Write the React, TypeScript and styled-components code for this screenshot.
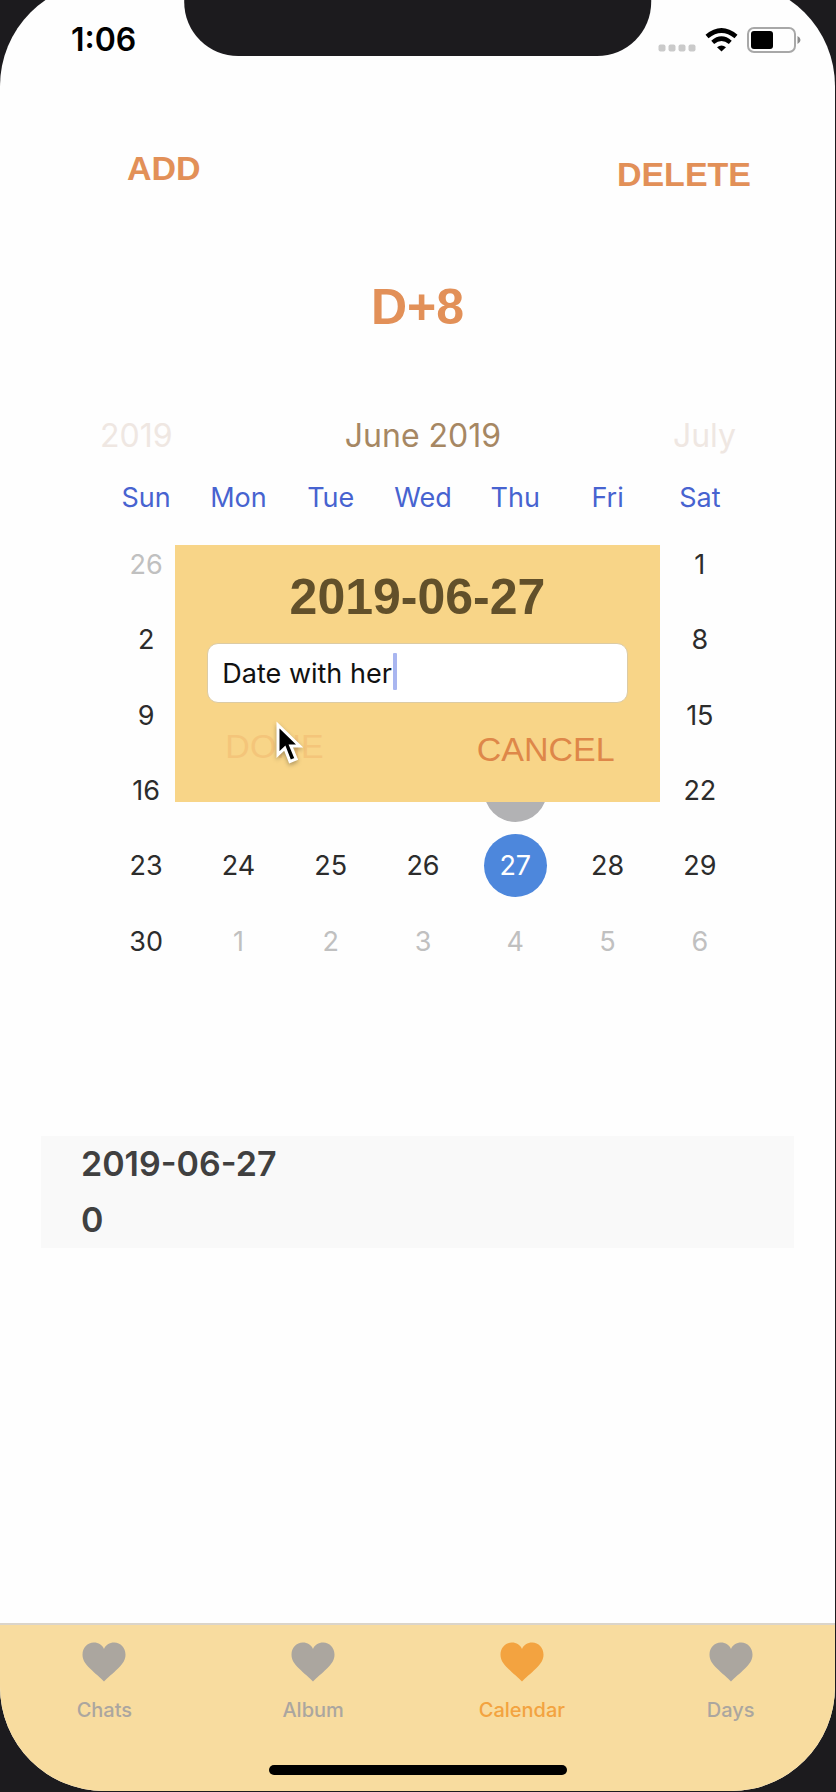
import React, { useState } from "react";
import styled, { createGlobalStyle } from "styled-components";

const ui = `Inter, "Liberation Sans", sans-serif`;
const helvetica = `"Liberation Sans", Arial, sans-serif`;

const GlobalStyle = createGlobalStyle`
  *, *::before, *::after { box-sizing: border-box; }
  body { margin: 0; background: #1c1b1e; font-family: ${ui}; }
  button, input { font: inherit; color: inherit; }
`;

const Bezel = styled.div`
  display: flex;
  min-height: 100vh;
  padding: 0 1px 1px 0;
  overflow: hidden;
  background: #1c1b1e;
`;

const Screen = styled.div`
  flex: 1;
  min-width: 0;
  display: flex;
  flex-direction: column;
  margin-top: -18px;
  padding-top: 18px;
  border-radius: 104px;
  overflow: hidden;
  background: #fefefe;
`;

const StatusBar = styled.div`
  position: relative;
  display: flex;
  align-items: center;
  justify-content: space-between;
  height: 80px;
  padding: 0 34px 0 71px;
`;

const Notch = styled.div`
  position: absolute;
  top: 0;
  left: 50%;
  width: 56%;
  height: 56px;
  transform: translateX(-50%);
  border-radius: 0 0 54px 54px;
  background: #1c1b1e;
`;

const Clock = styled.time`
  font-size: 32px;
  line-height: 40px;
  font-weight: 600;
  color: #000;
`;

const StatusIcons = styled.div`
  display: flex;
  align-items: center;
  gap: 9px;

  svg { display: block; }
`;

const Header = styled.header`
  display: flex;
  justify-content: space-between;
  align-items: flex-start;
  padding: 68px 84px 0 127px;
`;

const TextButton = styled.button<{ $tone?: string; $bold?: boolean; $drop?: number }>`
  border: 0;
  padding: 0;
  background: none;
  margin-top: ${(p) => p.$drop ?? 0}px;
  font-family: ${helvetica};
  font-size: 34px;
  line-height: 40px;
  font-weight: ${(p) => (p.$bold ? 700 : 400)};
  color: ${(p) => p.$tone ?? "#e29058"};
`;

const Counter = styled.h1`
  margin: 83px 0 0;
  font-family: ${helvetica};
  font-size: 50px;
  line-height: 60px;
  font-weight: 700;
  text-align: center;
  color: #e29058;
`;

const CalendarArea = styled.section`
  position: relative;
  margin-top: 79px;
  padding: 0 89px 0 100px;
`;

const Months = styled.div`
  display: grid;
  grid-template-columns: 1fr auto 1fr;
  font-size: 32px;
  line-height: 40px;
  margin-bottom: 22px;
`;

const Month = styled.span<{ $faded?: boolean; $end?: boolean }>`
  color: ${(p) => (p.$faded ? "#efe7e2" : "#a68763")};
  text-align: ${(p) => (p.$end ? "right" : "left")};
  padding-right: ${(p) => (p.$end ? 10 : 0)}px;
`;

const Grid = styled.table`
  width: 100%;
  height: 501px;
  table-layout: fixed;
  border-collapse: collapse;
  font-size: 27px;
`;

const Weekday = styled.th`
  height: 49px;
  padding: 0 0 9px;
  font-weight: 400;
  line-height: 40px;
  color: #4763d0;
`;

const DayCell = styled.td`
  padding: 0;
  text-align: center;
  vertical-align: middle;
`;

type DayKind = "normal" | "muted" | "today" | "selected";
const dayInk: Record<DayKind, string> = {
  normal: "#2c2c2c",
  muted: "#c0c0c0",
  today: "#ffffff",
  selected: "#ffffff",
};
const dayFill: Record<DayKind, string> = {
  normal: "transparent",
  muted: "transparent",
  today: "#b2b2b4",
  selected: "#4d87dc",
};

const Day = styled.button<{ $kind: DayKind }>`
  display: block;
  width: 63px;
  height: 63px;
  margin: 0 auto;
  padding: 0;
  border: 0;
  border-radius: 50%;
  background: ${(p) => dayFill[p.$kind]};
  color: ${(p) => dayInk[p.$kind]};
`;

const Dialog = styled.div`
  position: absolute;
  top: 129px;
  left: 21%;
  right: 21%;
  padding: 22px 32px 0;
  height: 257px;
  background: #f8d588;
`;

const DialogTitle = styled.h2`
  margin: 0 0 16px;
  font-family: ${helvetica};
  font-size: 50px;
  line-height: 60px;
  font-weight: 700;
  text-align: center;
  color: #62502a;
`;

const Field = styled.div`
  position: relative;
`;

const TextInput = styled.input`
  display: block;
  width: 100%;
  height: 60px;
  padding: 0 14px;
  border: 1px solid #dccba4;
  border-radius: 11px;
  background: #fff;
  font-size: 27px;
  line-height: 40px;
  color: #111;
  outline: none;
`;

const Caret = styled.span`
  position: absolute;
  top: 10px;
  left: 186px;
  width: 4px;
  height: 37px;
  border-radius: 1px;
  background: #a9b6f0;
`;

const DialogActions = styled.div`
  position: relative;
  display: flex;
  justify-content: space-between;
  align-items: flex-start;
  padding: 23px 13px 0 18px;
`;

const Pointer = styled.svg`
  position: absolute;
  top: 17px;
  left: 68px;
  overflow: visible;
  filter: drop-shadow(0 2px 2px rgba(0, 0, 0, 0.3));
`;

const Events = styled.dl`
  margin: 157px 41px 40px;
  padding: 0 41px 0 40px;
  background: #f9f9f9;
  font-size: 34px;
  line-height: 56px;
  font-weight: 600;
  color: #404040;

  dt, dd { margin: 0; }
`;

const TabBar = styled.nav`
  position: relative;
  display: grid;
  grid-template-columns: repeat(4, 1fr);
  margin-top: auto;
  height: 168px;
  padding-top: 17px;
  border-top: 2px solid #dbd5ca;
  background: #f8dc9f;
`;

const Tab = styled.a<{ $active?: boolean }>`
  display: flex;
  flex-direction: column;
  align-items: center;
  gap: 16px;
  text-decoration: none;
  font-size: 20px;
  line-height: 24px;
  font-weight: 500;
  color: ${(p) => (p.$active ? "#f3a340" : "#aba69f")};
`;

const HomeIndicator = styled.div`
  position: absolute;
  left: 50%;
  bottom: 16px;
  width: 298px;
  height: 10px;
  transform: translateX(-50%);
  border-radius: 5px;
  background: #000;
`;

const SignalDots = () => (
  <svg width="38" height="24" viewBox="0 0 38 24" aria-hidden="true">
    {[0, 10, 20, 30].map((x) => (
      <rect key={x} x={x + 0.5} y="16.5" width="7" height="7" rx="2" fill="#cacaca" />
    ))}
  </svg>
);

const Wifi = () => (
  <svg width="33" height="24" viewBox="0 0 33 24" aria-hidden="true">
    <path d="M2 8.6 Q16.5 -3.6 31 8.6" fill="none" stroke="#000" strokeWidth="4.6" />
    <path d="M7.7 14.4 Q16.5 6.8 25.3 14.4" fill="none" stroke="#000" strokeWidth="4.4" />
    <path d="M12 19.2 Q16.5 15.8 21 19.2 L16.5 23.6 Z" fill="#000" />
  </svg>
);

const Battery = () => (
  <svg width="54" height="26" viewBox="0 0 54 26" aria-hidden="true">
    <rect x="1" y="1" width="47" height="24" rx="6" fill="none" stroke="#a8a8a8" strokeWidth="2" />
    <rect x="4" y="4" width="22" height="18" rx="3" fill="#000" />
    <path d="M50.5 9 Q53.5 10.5 53.5 13 Q53.5 15.5 50.5 17 Z" fill="#8c8c8c" />
  </svg>
);

const Heart = () => (
  <svg width="44" height="40" viewBox="0 0 44 40" fill="currentColor" aria-hidden="true">
    <path d="M22 39.5 C19 36 13 31.5 8 26.5 C3 21.5 0.5 18 0.5 12.5 C0.5 5.5 5.5 0.5 11.8 0.5 C16.5 0.5 20.4 3 22 7 C23.6 3 27.5 0.5 32.2 0.5 C38.5 0.5 43.5 5.5 43.5 12.5 C43.5 18 41 21.5 36 26.5 C31 31.5 25 36 22 39.5 Z" />
  </svg>
);

const weekdays = ["Sun", "Mon", "Tue", "Wed", "Thu", "Fri", "Sat"];
const firstCell = new Date(2019, 4, 26);

const weeks = Array.from({ length: 6 }, (_, week) =>
  Array.from({ length: 7 }, (_, day) => {
    const date = new Date(firstCell);
    date.setDate(firstCell.getDate() + week * 7 + day);
    const inMonth = date.getMonth() === 5;
    const n = date.getDate();
    const kind: DayKind = !inMonth ? "muted" : n === 20 ? "today" : n === 27 ? "selected" : "normal";
    // Dates that lie behind the open dialog keep their cell but show no number.
    const covered = week < 4 && day > 0 && day < 6;
    return { n, kind, covered };
  })
);

const tabs = ["Chats", "Album", "Calendar", "Days"];

export default function App() {
  const [title, setTitle] = useState("Date with her");

  return (
    <>
      <GlobalStyle />
      <Bezel>
        <Screen>
          <StatusBar>
            <Clock>1:06</Clock>
            <Notch />
            <StatusIcons>
              <SignalDots />
              <Wifi />
              <Battery />
            </StatusIcons>
          </StatusBar>

          <Header>
            <TextButton $bold>ADD</TextButton>
            <TextButton $bold $drop={6}>DELETE</TextButton>
          </Header>

          <Counter>D+8</Counter>

          <CalendarArea>
            <Months>
              <Month $faded>2019</Month>
              <Month>June 2019</Month>
              <Month $faded $end>July</Month>
            </Months>
            <Grid>
              <thead>
                <tr>
                  {weekdays.map((d) => (
                    <Weekday key={d} scope="col">{d}</Weekday>
                  ))}
                </tr>
              </thead>
              <tbody>
                {weeks.map((week, i) => (
                  <tr key={i}>
                    {week.map(({ n, kind, covered }, j) => (
                      <DayCell key={j}>
                        <Day $kind={kind} disabled={covered}>{covered ? null : n}</Day>
                      </DayCell>
                    ))}
                  </tr>
                ))}
              </tbody>
            </Grid>

            <Dialog role="dialog" aria-labelledby="event-date">
              <DialogTitle id="event-date">2019-06-27</DialogTitle>
              <Field>
                <TextInput
                  type="text"
                  aria-label="Event title"
                  value={title}
                  onChange={(e) => setTitle(e.target.value)}
                />
                <Caret />
              </Field>
              <DialogActions>
                <TextButton $tone="#f4c57a">DONE</TextButton>
                <TextButton $tone="#de8749" $drop={3}>CANCEL</TextButton>
                <Pointer width="30" height="46" viewBox="0 0 30 46" aria-hidden="true">
                  <path
                    d="M3 5 V34.5 L9.8 28.2 L15 41.5 L21.2 39 L15.8 26 H24.6 Z"
                    fill="#000"
                    stroke="#fff"
                    strokeWidth="3"
                  />
                </Pointer>
              </DialogActions>
            </Dialog>
          </CalendarArea>

          <Events>
            <dt>2019-06-27</dt>
            <dd>0</dd>
          </Events>

          <TabBar>
            {tabs.map((t) => (
              <Tab key={t} href={`#${t.toLowerCase()}`} $active={t === "Calendar"}>
                <Heart />
                {t}
              </Tab>
            ))}
            <HomeIndicator />
          </TabBar>
        </Screen>
      </Bezel>
    </>
  );
}
